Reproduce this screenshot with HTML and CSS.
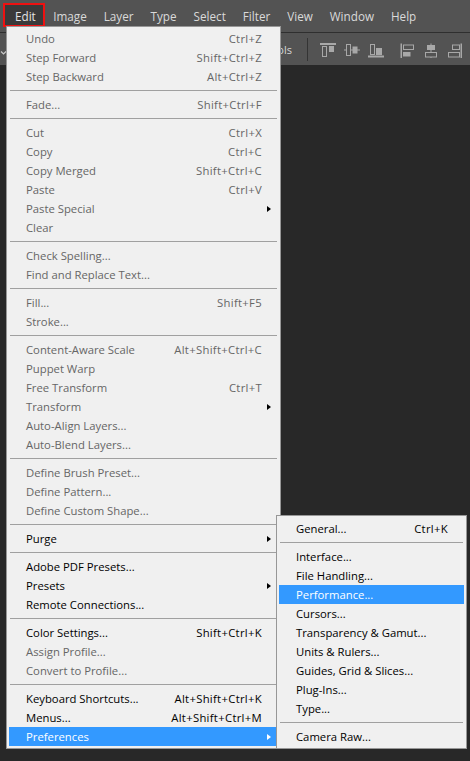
FILE: index.html
```html
<!DOCTYPE html>
<html lang="en">
<head>
<meta charset="utf-8">
<title>Photoshop Edit menu</title>
<link rel="stylesheet" href="styles.css">
</head>
<body>
<div class="app">
  <nav class="menubar">
    <span class="title active">Edit</span>
    <span class="title">Image</span>
    <span class="title">Layer</span>
    <span class="title">Type</span>
    <span class="title">Select</span>
    <span class="title">Filter</span>
    <span class="title">View</span>
    <span class="title">Window</span>
    <span class="title">Help</span>
  </nav>

  <div class="options">
    <span class="opt-preset">
      <svg class="chev" width="7" height="6" viewBox="0 0 7 6"><path d="M1 1.5 L3.5 4 L6 1.5" fill="none" stroke="#c8c8c8" stroke-width="1.2"/></svg>
    </span>
    <div class="opt-clip"><span class="opt-label">Show Transform Controls</span></div>
    <span class="vsep"></span>
    <div class="align-group">
      <svg class="ico" width="16" height="16" viewBox="0 0 16 16">
        <rect x="0" y="1" width="16" height="2" fill="#a8a8a8"/>
        <rect x="2.5" y="4.5" width="4" height="10" fill="none" stroke="#a8a8a8"/>
        <rect x="9" y="4" width="5" height="6" fill="#a8a8a8"/>
      </svg>
      <svg class="ico" width="16" height="16" viewBox="0 0 16 16">
        <rect x="0" y="7.5" width="16" height="1" fill="#a8a8a8"/>
        <rect x="2.5" y="2.5" width="4" height="11" fill="#535353" stroke="#a8a8a8"/>
        <rect x="8.5" y="4.5" width="5" height="7" fill="#a8a8a8"/>
      </svg>
      <svg class="ico" width="16" height="16" viewBox="0 0 16 16">
        <rect x="0" y="13.5" width="16" height="2" fill="#a8a8a8"/>
        <rect x="2.5" y="2.5" width="4" height="10" fill="none" stroke="#a8a8a8"/>
        <rect x="8" y="6" width="6" height="7" fill="#a8a8a8"/>
      </svg>
    </div>
    <div class="align-group">
      <svg class="ico" width="16" height="16" viewBox="0 0 16 16">
        <rect x="1.5" y="1.5" width="1.5" height="14.5" fill="#a8a8a8"/>
        <rect x="4.5" y="3" width="10" height="4.5" fill="none" stroke="#a8a8a8"/>
        <rect x="4" y="10" width="7.5" height="4.5" fill="#a8a8a8"/>
      </svg>
      <svg class="ico" width="16" height="16" viewBox="0 0 16 16">
        <rect x="7.5" y="1.5" width="1" height="14.5" fill="#a8a8a8"/>
        <rect x="4" y="3" width="8" height="5" fill="#a8a8a8"/>
        <rect x="2.5" y="10.5" width="11" height="4.5" fill="#535353" stroke="#a8a8a8"/>
      </svg>
      <svg class="ico" width="16" height="16" viewBox="0 0 16 16">
        <rect x="13.5" y="1.5" width="1.5" height="14.5" fill="#a8a8a8"/>
        <rect x="5.5" y="3" width="7" height="4.5" fill="none" stroke="#a8a8a8"/>
        <rect x="1.5" y="10.5" width="11" height="4.5" fill="none" stroke="#a8a8a8"/>
      </svg>
    </div>
  </div>

  <main class="workspace"></main>

  <ul class="menu main-menu">
    <li class="item disabled"><span>Undo</span><span class="key">Ctrl+Z</span></li>
    <li class="item disabled"><span>Step Forward</span><span class="key">Shift+Ctrl+Z</span></li>
    <li class="item disabled"><span>Step Backward</span><span class="key">Alt+Ctrl+Z</span></li>
    <li class="sep"></li>
    <li class="item disabled"><span>Fade...</span><span class="key">Shift+Ctrl+F</span></li>
    <li class="sep"></li>
    <li class="item disabled"><span>Cut</span><span class="key">Ctrl+X</span></li>
    <li class="item disabled"><span>Copy</span><span class="key">Ctrl+C</span></li>
    <li class="item disabled"><span>Copy Merged</span><span class="key">Shift+Ctrl+C</span></li>
    <li class="item disabled"><span>Paste</span><span class="key">Ctrl+V</span></li>
    <li class="item disabled"><span>Paste Special</span><span class="arrow"></span></li>
    <li class="item disabled"><span>Clear</span></li>
    <li class="sep"></li>
    <li class="item disabled"><span>Check Spelling...</span></li>
    <li class="item disabled"><span>Find and Replace Text...</span></li>
    <li class="sep"></li>
    <li class="item disabled"><span>Fill...</span><span class="key">Shift+F5</span></li>
    <li class="item disabled"><span>Stroke...</span></li>
    <li class="sep"></li>
    <li class="item disabled"><span>Content-Aware Scale</span><span class="key">Alt+Shift+Ctrl+C</span></li>
    <li class="item disabled"><span>Puppet Warp</span></li>
    <li class="item disabled"><span>Free Transform</span><span class="key">Ctrl+T</span></li>
    <li class="item disabled"><span>Transform</span><span class="arrow"></span></li>
    <li class="item disabled"><span>Auto-Align Layers...</span></li>
    <li class="item disabled"><span>Auto-Blend Layers...</span></li>
    <li class="sep"></li>
    <li class="item disabled"><span>Define Brush Preset...</span></li>
    <li class="item disabled"><span>Define Pattern...</span></li>
    <li class="item disabled"><span>Define Custom Shape...</span></li>
    <li class="sep"></li>
    <li class="item"><span>Purge</span><span class="arrow"></span></li>
    <li class="sep"></li>
    <li class="item"><span>Adobe PDF Presets...</span></li>
    <li class="item"><span>Presets</span><span class="arrow"></span></li>
    <li class="item"><span>Remote Connections...</span></li>
    <li class="sep"></li>
    <li class="item"><span>Color Settings...</span><span class="key">Shift+Ctrl+K</span></li>
    <li class="item disabled"><span>Assign Profile...</span></li>
    <li class="item disabled"><span>Convert to Profile...</span></li>
    <li class="sep"></li>
    <li class="item"><span>Keyboard Shortcuts...</span><span class="key">Alt+Shift+Ctrl+K</span></li>
    <li class="item"><span>Menus...</span><span class="key">Alt+Shift+Ctrl+M</span></li>
    <li class="item hl"><span>Preferences</span><span class="arrow"></span></li>
  </ul>

  <ul class="menu sub-menu">
    <li class="item"><span>General...</span><span class="key">Ctrl+K</span></li>
    <li class="sep"></li>
    <li class="item"><span>Interface...</span></li>
    <li class="item"><span>File Handling...</span></li>
    <li class="item hl"><span>Performance...</span></li>
    <li class="item"><span>Cursors...</span></li>
    <li class="item"><span>Transparency &amp; Gamut...</span></li>
    <li class="item"><span>Units &amp; Rulers...</span></li>
    <li class="item"><span>Guides, Grid &amp; Slices...</span></li>
    <li class="item"><span>Plug-Ins...</span></li>
    <li class="item"><span>Type...</span></li>
    <li class="sep"></li>
    <li class="item"><span>Camera Raw...</span></li>
  </ul>
</div>
</body>
</html>
```

FILE: styles.css
```css
html, body {
  margin: 0;
  padding: 0;
  background: #282828;
}

.app {
  position: relative;
  width: 470px;
  height: 761px;
  overflow: hidden;
  display: flex;
  flex-direction: column;
  font-family: "Open Sans", "Liberation Sans", sans-serif;
}

/* top menu bar */
.menubar {
  display: flex;
  align-items: center;
  height: 32px;
  padding-left: 3px;
  background: #535353;
  border-bottom: 1px solid #2f2f2f;
  flex: 0 0 auto;
}

.title {
  position: relative;
  padding: 0 8.5px;
  line-height: 32px;
  font-size: 11.7px;
  color: #dadada;
  white-space: nowrap;
}

.title.active {
  padding: 0 9px 0 12px;
  isolation: isolate;
  color: #e4e4e4;
}

.title.active::before {
  content: "";
  position: absolute;
  left: 0;
  right: 0;
  top: 3px;
  bottom: 5px;
  border: 2px solid #ee1111;
  background: #3a3a3a;
  z-index: -1;
}

/* options bar */
.options {
  display: flex;
  align-items: center;
  height: 32px;
  background: #535353;
  flex: 0 0 auto;
}

.opt-preset {
  flex: 0 0 7px;
  width: 7px;
  display: flex;
  align-items: center;
}

.chev {
  display: block;
  margin-top: 8px;
}

.opt-clip {
  flex: 0 0 11px;
  width: 11px;
  margin-left: 274px;
  display: flex;
  justify-content: flex-end;
  overflow: hidden;
  white-space: nowrap;
}

.opt-label {
  flex: 0 0 auto;
  font-size: 11px;
  color: #d6d6d6;
}

.vsep {
  width: 1px;
  height: 23px;
  margin-left: 15px;
  background: #343434;
}

.align-group {
  display: flex;
  gap: 8px;
  margin-left: 12px;
}

.align-group + .align-group {
  margin-left: 15px;
}

.ico {
  display: block;
  margin-top: 1px;
}

.workspace {
  flex: 1 1 auto;
  background: #282828;
}

/* dropdown menus */
.menu {
  position: absolute;
  margin: 0;
  padding: 2px;
  list-style: none;
  background: #f0f0f0;
  border: 1px solid #979797;
  box-sizing: border-box;
  font-family: "Open Sans", "Liberation Sans", sans-serif;
  font-size: 11.3px;
}

.main-menu {
  left: 6px;
  top: 26px;
  width: 275px;
  z-index: 2;
}

.sub-menu {
  left: 276px;
  top: 515px;
  width: 191px;
  padding-top: 3px;
  z-index: 3;
}

.item {
  display: flex;
  align-items: center;
  height: 19px;
  padding: 0 16px 0 17px;
  color: #000;
  white-space: nowrap;
}

.item.disabled {
  color: #666666;
}

.item.hl {
  background: #3399ff;
  color: #fff;
}

.key {
  margin-left: auto;
  letter-spacing: 0.3px;
}

.arrow {
  margin-left: auto;
  margin-right: -9px;
  width: 0;
  height: 0;
  border-left: 4px solid #000;
  border-top: 3.5px solid transparent;
  border-bottom: 3.5px solid transparent;
}

.item.hl .arrow {
  border-left-color: #fff;
}

.sep {
  height: 0;
  margin: 4px 1px;
  border-top: 1px solid #a0a0a0;
}
```
